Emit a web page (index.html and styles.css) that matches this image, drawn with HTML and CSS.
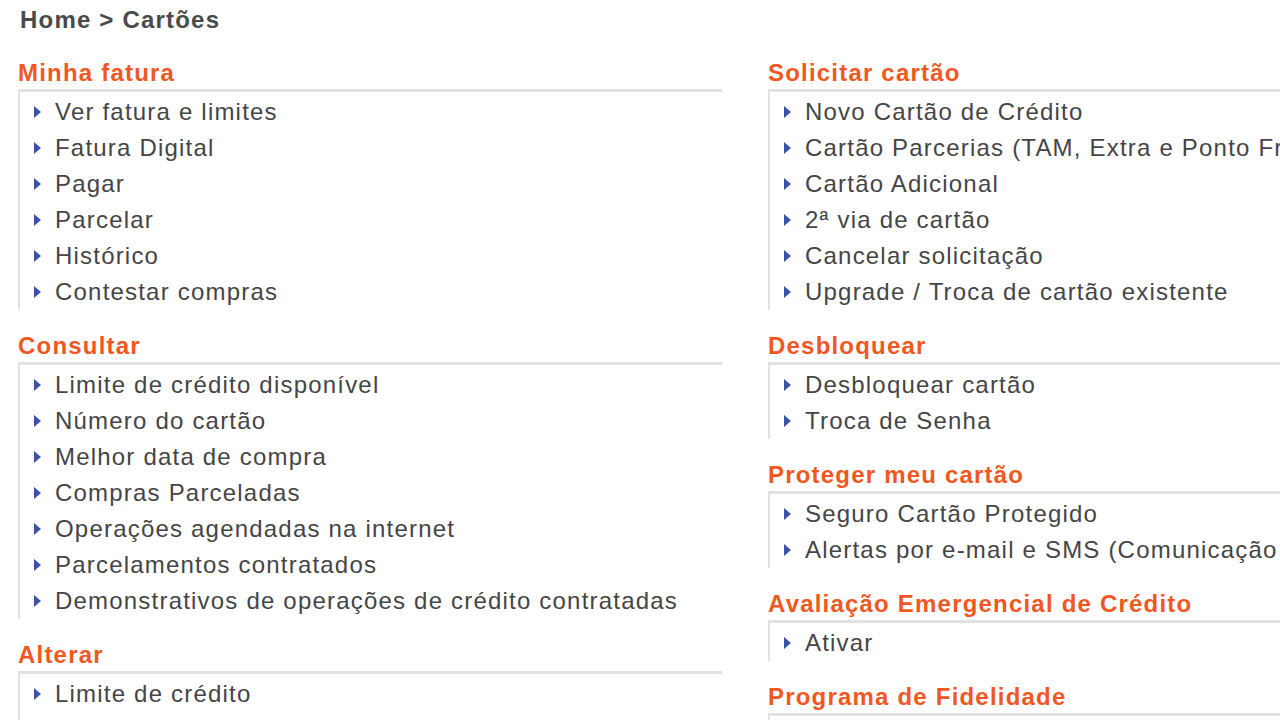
FILE: index.html
```html
<!DOCTYPE html>
<html lang="pt-BR">
<head>
    <meta charset="UTF-8">
    <title>Cartões</title>
    <link rel="stylesheet" href="styles.css">
</head>
<body>
    <div class="page">
        <div class="breadcrumb">Home &gt; Cartões</div>

        <div class="columns">
            <!-- Left column -->
            <div class="col">
                <div class="section">
                    <h2>Minha fatura</h2>
                    <ul class="menu">
                        <li>Ver fatura e limites</li>
                        <li>Fatura Digital</li>
                        <li>Pagar</li>
                        <li>Parcelar</li>
                        <li>Histórico</li>
                        <li>Contestar compras</li>
                    </ul>
                </div>
                <div class="section">
                    <h2>Consultar</h2>
                    <ul class="menu">
                        <li>Limite de crédito disponível</li>
                        <li>Número do cartão</li>
                        <li>Melhor data de compra</li>
                        <li>Compras Parceladas</li>
                        <li>Operações agendadas na internet</li>
                        <li>Parcelamentos contratados</li>
                        <li>Demonstrativos de operações de crédito contratadas</li>
                    </ul>
                </div>
                <div class="section">
                    <h2>Alterar</h2>
                    <ul class="menu">
                        <li>Limite de crédito</li>
                        <li>Data de vencimento da fatura</li>
                    </ul>
                </div>
            </div>

            <!-- Right column -->
            <div class="col">
                <div class="section">
                    <h2>Solicitar cartão</h2>
                    <ul class="menu">
                        <li>Novo Cartão de Crédito</li>
                        <li>Cartão Parcerias (TAM, Extra e Ponto Frio)</li>
                        <li>Cartão Adicional</li>
                        <li>2ª via de cartão</li>
                        <li>Cancelar solicitação</li>
                        <li>Upgrade / Troca de cartão existente</li>
                    </ul>
                </div>
                <div class="section">
                    <h2>Desbloquear</h2>
                    <ul class="menu">
                        <li>Desbloquear cartão</li>
                        <li>Troca de Senha</li>
                    </ul>
                </div>
                <div class="section">
                    <h2>Proteger meu cartão</h2>
                    <ul class="menu">
                        <li>Seguro Cartão Protegido</li>
                        <li>Alertas por e-mail e SMS (Comunicação de compras)</li>
                    </ul>
                </div>
                <div class="section">
                    <h2>Avaliação Emergencial de Crédito</h2>
                    <ul class="menu">
                        <li>Ativar</li>
                    </ul>
                </div>
                <div class="section">
                    <h2>Programa de Fidelidade</h2>
                    <ul class="menu">
                        <li>Pontos e resgates</li>
                    </ul>
                </div>
            </div>
        </div>
    </div>
</body>
</html>
```

FILE: styles.css
```css
:root {
    --orange: #f0581f;
    --text: #454545;
    --bullet: #3b53a4;
    --line: #e2e2e2;
}

body {
    margin: 0;
    font-family: 'Liberation Sans', Arial, sans-serif;
    background: #ffffff;
    color: var(--text);
    overflow: hidden;
}

.page {
    padding: 7px 0 0 18px;
}

.breadcrumb {
    font-size: 24px;
    font-weight: bold;
    line-height: 26px;
    letter-spacing: 1.2px;
    color: #4a4a4a;
    margin-left: 2px;
    margin-bottom: 27px;
}

.columns {
    display: grid;
    grid-template-columns: 704px 704px;
    column-gap: 46px;
}

.section {
    margin-bottom: 23px;
}

.section h2 {
    margin: 0 0 3px 0;
    font-size: 24px;
    font-weight: bold;
    line-height: 26px;
    letter-spacing: 1.2px;
    color: var(--orange);
}

.menu {
    list-style: none;
    margin: 0;
    padding: 2px 0 0 13px;
    border-top: 3px solid var(--line);
    border-left: 2px solid var(--line);
}

.menu li {
    position: relative;
    padding-left: 22px;
    font-size: 24px;
    line-height: 36px;
    letter-spacing: 1.2px;
    white-space: nowrap;
}

.menu li::before {
    content: '';
    position: absolute;
    left: 1px;
    top: 12px;
    border-left: 7px solid var(--bullet);
    border-top: 6px solid transparent;
    border-bottom: 6px solid transparent;
}
```
